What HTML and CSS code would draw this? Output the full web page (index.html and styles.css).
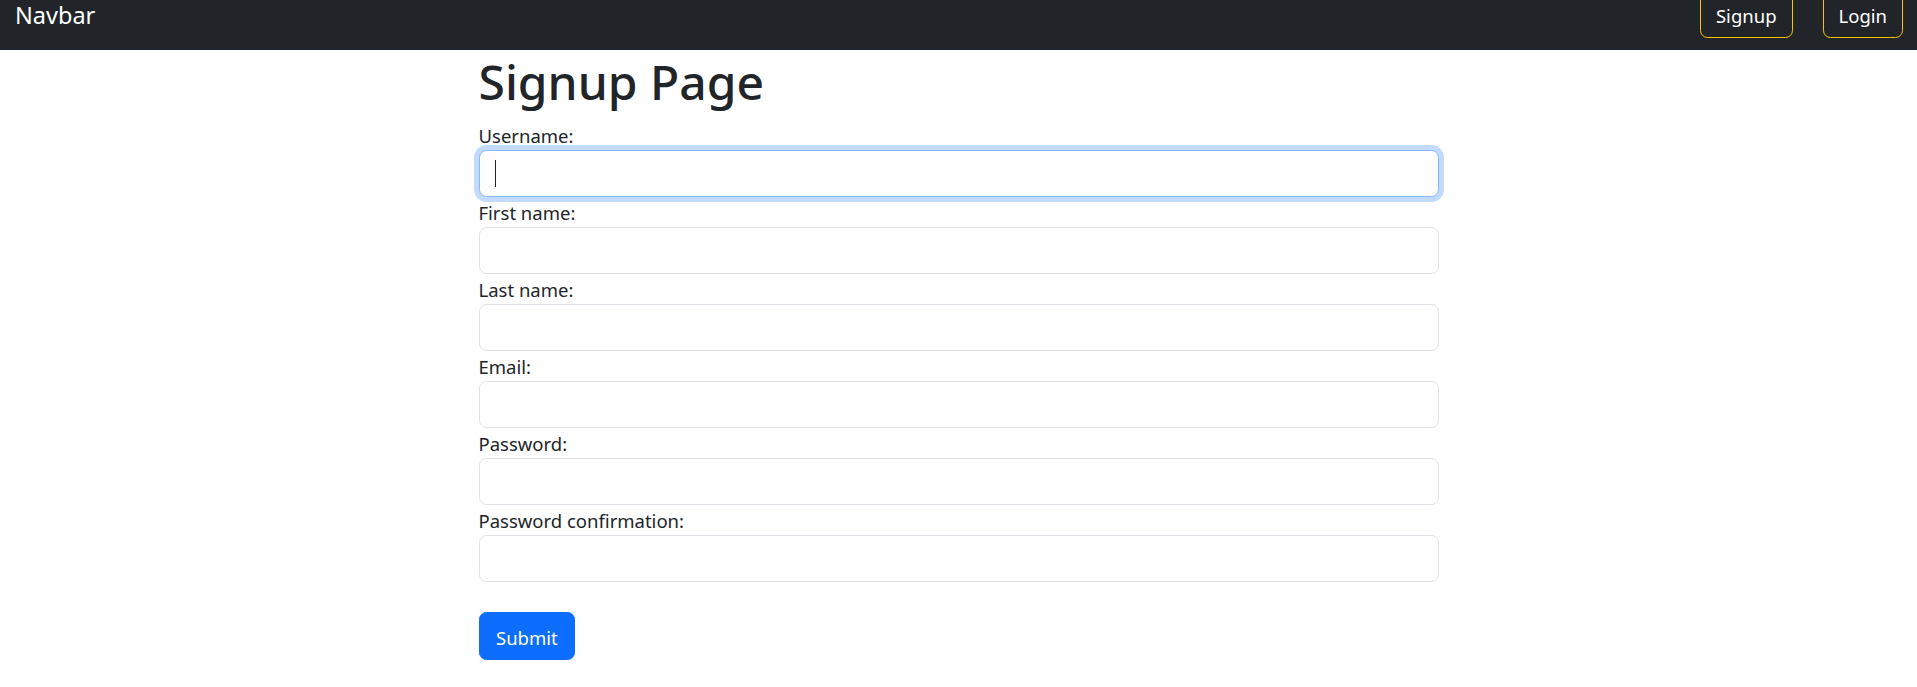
FILE: index.html
```html
<!DOCTYPE html>
<html lang="en">
<head>
<meta charset="utf-8">
<title>Signup Page</title>
<link rel="stylesheet" href="styles.css">
</head>
<body>
<nav class="navbar">
  <a class="brand" href="#">Navbar</a>
  <div class="nav-actions">
    <a class="btn-outline" href="#">Signup</a>
    <a class="btn-outline" href="#">Login</a>
  </div>
</nav>
<main class="container">
  <h1 class="title">Signup Page</h1>
  <form class="signup-form">
    <label class="field-label" for="username">Username:</label>
    <div class="input-wrap focused">
      <input class="form-control focus" type="text" id="username">
    </div>
    <label class="field-label" for="first_name">First name:</label>
    <input class="form-control" type="text" id="first_name">
    <label class="field-label" for="last_name">Last name:</label>
    <input class="form-control" type="text" id="last_name">
    <label class="field-label" for="email">Email:</label>
    <input class="form-control" type="email" id="email">
    <label class="field-label" for="password1">Password:</label>
    <input class="form-control" type="password" id="password1">
    <label class="field-label" for="password2">Password confirmation:</label>
    <input class="form-control" type="password" id="password2">
    <button class="btn-submit" type="button">Submit</button>
  </form>
</main>
</body>
</html>
```

FILE: styles.css
```css
* { box-sizing: border-box; }
html, body { margin: 0; padding: 0; }
body {
  font-family: "Noto Sans", "Open Sans", sans-serif;
  font-size: 18.5px;
  line-height: 30px;
  color: #212529;
  background: #fff;
}
.navbar {
  height: 50px;
  background: #212529;
  display: flex;
  justify-content: space-between;
  align-items: flex-start;
  padding: 0 14px 0 15px;
  overflow: hidden;
}
.brand {
  color: #fff;
  text-decoration: none;
  font-size: 23.5px;
  line-height: 37px;
  margin-top: -3px;
}
.nav-actions {
  display: flex;
  gap: 30px;
  margin-top: -10px;
}
.btn-outline {
  display: inline-block;
  color: #fff;
  text-decoration: none;
  border: 1px solid #ffc107;
  border-radius: 7.5px;
  padding: 10px 15px 6px;
  font-size: 18.5px;
  line-height: 30px;
  height: 48px;
}
.container {
  width: 960px;
  margin: 0 auto;
}
.title {
  font-size: 48px;
  line-height: 60px;
  font-weight: 500;
  padding-top: 2px;
  margin: 0 0 8px;
}
.signup-form { display: flex; flex-direction: column; }
.field-label {
  display: block;
  padding-top: 1px;
  line-height: 29px;
}
.input-wrap { position: relative; }
.input-wrap.focused::after {
  content: "";
  position: absolute;
  left: 16px;
  top: 10px;
  width: 1px;
  height: 27px;
  background: #212529;
}
.form-control {
  display: block;
  width: 100%;
  height: 47px;
  padding: 7.5px 15px;
  font-family: inherit;
  font-size: 18.5px;
  line-height: 30px;
  color: #212529;
  background: #fff;
  border: 1px solid #dee2e6;
  border-radius: 7.5px;
  outline: none;
}
.form-control.focus {
  border-color: #86b7fe;
  box-shadow: 0 0 0 5px rgba(13, 110, 253, 0.25);
}
.btn-submit {
  align-self: flex-start;
  margin-top: 30px;
  height: 48px;
  padding: 9px 16.5px 6px;
  font-family: inherit;
  font-size: 18.5px;
  line-height: 30px;
  color: #fff;
  background: #0d6efd;
  border: 1px solid #0d6efd;
  border-radius: 7.5px;
}
```
